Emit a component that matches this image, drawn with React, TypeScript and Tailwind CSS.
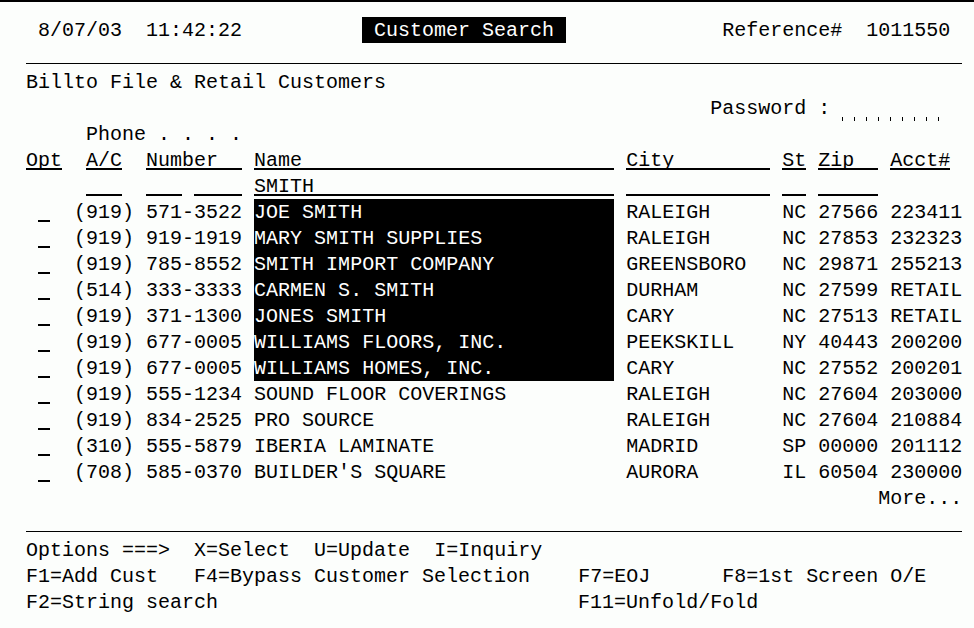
import React from "react";

type Seg = {
  col: number;
  text?: string;
  kind?: "u" | "inv" | "line" | "ticks" | "plain";
  len?: number;
};

function pad(s: string, n: number) {
  return s.length >= n ? s : s + " ".repeat(n - s.length);
}

function SegView({ seg }: { seg: Seg }) {
  const text = pad(seg.text ?? "", seg.len ?? (seg.text ?? "").length);
  if (seg.kind === "u") {
    return <span className="block h-[23px] border-b-2 border-black">{text}</span>;
  }
  if (seg.kind === "inv") {
    return <span className="block h-[26px] bg-black text-white">{text}</span>;
  }
  if (seg.kind === "line") {
    return <span className="block h-[21px] border-b border-black">{text}</span>;
  }
  if (seg.kind === "ticks") {
    const n = seg.len ?? 9;
    return (
      <span className="flex h-[26px]">
        {Array.from({ length: n }).map((_, i) => (
          <span key={i} className="flex h-[26px] w-[12px] items-end">
            <span className="block h-[4px] w-px bg-black" />
          </span>
        ))}
      </span>
    );
  }
  return <span className="block">{text}</span>;
}

function segLen(seg: Seg) {
  return seg.len ?? (seg.text ?? "").length;
}

function Row({ segs = [] }: { segs?: Seg[] }) {
  const out: React.ReactNode[] = [];
  let cur = 0;
  segs.forEach((seg, i) => {
    if (seg.col > cur) {
      out.push(
        <span key={"g" + i} className="block">
          {" ".repeat(seg.col - cur)}
        </span>
      );
    }
    out.push(<SegView key={"s" + i} seg={seg} />);
    cur = seg.col + segLen(seg);
  });
  return <div className="flex h-[26px] items-start whitespace-pre leading-[28px]">{out}</div>;
}

type Cust = {
  ac: string;
  ph: string;
  name: string;
  city: string;
  st: string;
  zip: string;
  acct: string;
  hi: boolean;
};

const customers: Cust[] = [
  { ac: "(919)", ph: "571-3522", name: "JOE SMITH", city: "RALEIGH", st: "NC", zip: "27566", acct: "223411", hi: true },
  { ac: "(919)", ph: "919-1919", name: "MARY SMITH SUPPLIES", city: "RALEIGH", st: "NC", zip: "27853", acct: "232323", hi: true },
  { ac: "(919)", ph: "785-8552", name: "SMITH IMPORT COMPANY", city: "GREENSBORO", st: "NC", zip: "29871", acct: "255213", hi: true },
  { ac: "(514)", ph: "333-3333", name: "CARMEN S. SMITH", city: "DURHAM", st: "NC", zip: "27599", acct: "RETAIL", hi: true },
  { ac: "(919)", ph: "371-1300", name: "JONES SMITH", city: "CARY", st: "NC", zip: "27513", acct: "RETAIL", hi: true },
  { ac: "(919)", ph: "677-0005", name: "WILLIAMS FLOORS, INC.", city: "PEEKSKILL", st: "NY", zip: "40443", acct: "200200", hi: true },
  { ac: "(919)", ph: "677-0005", name: "WILLIAMS HOMES, INC.", city: "CARY", st: "NC", zip: "27552", acct: "200201", hi: true },
  { ac: "(919)", ph: "555-1234", name: "SOUND FLOOR COVERINGS", city: "RALEIGH", st: "NC", zip: "27604", acct: "203000", hi: false },
  { ac: "(919)", ph: "834-2525", name: "PRO SOURCE", city: "RALEIGH", st: "NC", zip: "27604", acct: "210884", hi: false },
  { ac: "(310)", ph: "555-5879", name: "IBERIA LAMINATE", city: "MADRID", st: "SP", zip: "00000", acct: "201112", hi: false },
  { ac: "(708)", ph: "585-0370", name: "BUILDER'S SQUARE", city: "AURORA", st: "IL", zip: "60504", acct: "230000", hi: false },
];

export default function App() {
  return (
    <div className="h-[628px] w-[974px] overflow-hidden border-t-2 border-black bg-[#fcfefc] pl-[2px] pt-[15px] font-['Liberation_Mono',monospace] text-[20px] text-black">
      <Row
        segs={[
          { col: 3, text: "8/07/03" },
          { col: 12, text: "11:42:22" },
          { col: 30, text: " Customer Search ", kind: "inv" },
          { col: 60, text: "Reference#" },
          { col: 72, text: "1011550" },
        ]}
      />
      <Row segs={[{ col: 2, text: "", len: 78, kind: "line" }]} />
      <Row segs={[{ col: 2, text: "Billto File & Retail Customers" }]} />
      <Row
        segs={[
          { col: 59, text: "Password :" },
          { col: 70, kind: "ticks", len: 9 },
        ]}
      />
      <Row segs={[{ col: 7, text: "Phone . . . ." }]} />
      <Row
        segs={[
          { col: 2, text: "Opt", kind: "u" },
          { col: 7, text: "A/C", kind: "u" },
          { col: 12, text: "Number", len: 8, kind: "u" },
          { col: 21, text: "Name", len: 30, kind: "u" },
          { col: 52, text: "City", len: 12, kind: "u" },
          { col: 65, text: "St", kind: "u" },
          { col: 68, text: "Zip", len: 5, kind: "u" },
          { col: 74, text: "Acct#", kind: "u" },
        ]}
      />
      <Row
        segs={[
          { col: 7, text: "", len: 3, kind: "u" },
          { col: 12, text: "", len: 3, kind: "u" },
          { col: 16, text: "", len: 4, kind: "u" },
          { col: 21, text: "SMITH", len: 30, kind: "u" },
          { col: 52, text: "", len: 12, kind: "u" },
          { col: 65, text: "", len: 2, kind: "u" },
          { col: 68, text: "", len: 5, kind: "u" },
        ]}
      />
      {customers.map((c, i) => (
        <Row
          key={i}
          segs={[
            { col: 3, text: "", len: 1, kind: "u" },
            { col: 6, text: c.ac },
            { col: 12, text: c.ph },
            { col: 21, text: c.name, len: 30, kind: c.hi ? "inv" : "plain" },
            { col: 52, text: c.city },
            { col: 65, text: c.st },
            { col: 68, text: c.zip },
            { col: 74, text: c.acct },
          ]}
        />
      ))}
      <Row segs={[{ col: 73, text: "More..." }]} />
      <Row segs={[{ col: 2, text: "", len: 78, kind: "line" }]} />
      <Row
        segs={[
          { col: 2, text: "Options ===>" },
          { col: 16, text: "X=Select" },
          { col: 26, text: "U=Update" },
          { col: 36, text: "I=Inquiry" },
        ]}
      />
      <Row
        segs={[
          { col: 2, text: "F1=Add Cust" },
          { col: 16, text: "F4=Bypass Customer Selection" },
          { col: 48, text: "F7=EOJ" },
          { col: 60, text: "F8=1st Screen O/E" },
        ]}
      />
      <Row
        segs={[
          { col: 2, text: "F2=String search" },
          { col: 48, text: "F11=Unfold/Fold" },
        ]}
      />
    </div>
  );
}
